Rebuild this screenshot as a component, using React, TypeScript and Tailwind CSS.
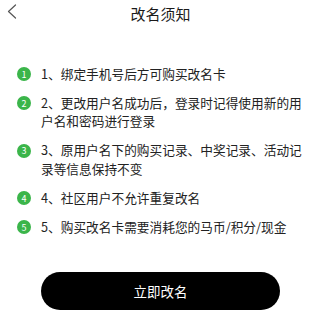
const rules = [
  "1、绑定手机号后方可购买改名卡",
  "2、更改用户名成功后，登录时记得使用新的用户名和密码进行登录",
  "3、原用户名下的购买记录、中奖记录、活动记录等信息保持不变",
  "4、社区用户不允许重复改名",
  "5、购买改名卡需要消耗您的马币/积分/现金",
];

function BackIcon() {
  return (
    <svg width="10" height="16" viewBox="0 0 10 16" fill="none" aria-hidden>
      <polyline
        points="8.5,1 1.5,7.5 8.5,14"
        stroke="#555"
        strokeWidth="1.2"
        strokeLinecap="round"
        strokeLinejoin="round"
      />
    </svg>
  );
}

export default function App() {
  return (
    <div
      className="flex h-[320px] w-[321px] flex-col bg-white text-[#222]"
      style={{ fontFamily: '"Noto Sans CJK SC", "Noto Sans", sans-serif' }}
    >
      {/* Nav bar */}
      <header className="relative flex h-[26px] shrink-0 items-center justify-center">
        <button type="button" className="absolute left-[7px] top-[4px]">
          <BackIcon />
        </button>
        <h1 className="text-[15px] leading-none text-[#1a1a1a]">改名须知</h1>
      </header>

      {/* Rules */}
      <ol className="flex flex-col gap-[10.5px] pl-[17px] pr-[11px] pt-[38.75px]">
        {rules.map((text, i) => (
          <li key={i} className="flex items-start gap-[10px]">
            <span className="mt-[2.25px] flex h-[14px] w-[14px] shrink-0 items-center justify-center rounded-full bg-[#3bb54a] text-[9px] leading-none text-white">
              {i + 1}
            </span>
            <p className="text-[12.7px] leading-[18.5px]">{text}</p>
          </li>
        ))}
      </ol>

      {/* Action */}
      <div className="flex justify-center pt-[36px]">
        <button
          type="button"
          className="flex h-[38px] w-[239px] items-center justify-center rounded-full bg-black text-[13.5px] text-white"
        >
          立即改名
        </button>
      </div>
    </div>
  );
}
